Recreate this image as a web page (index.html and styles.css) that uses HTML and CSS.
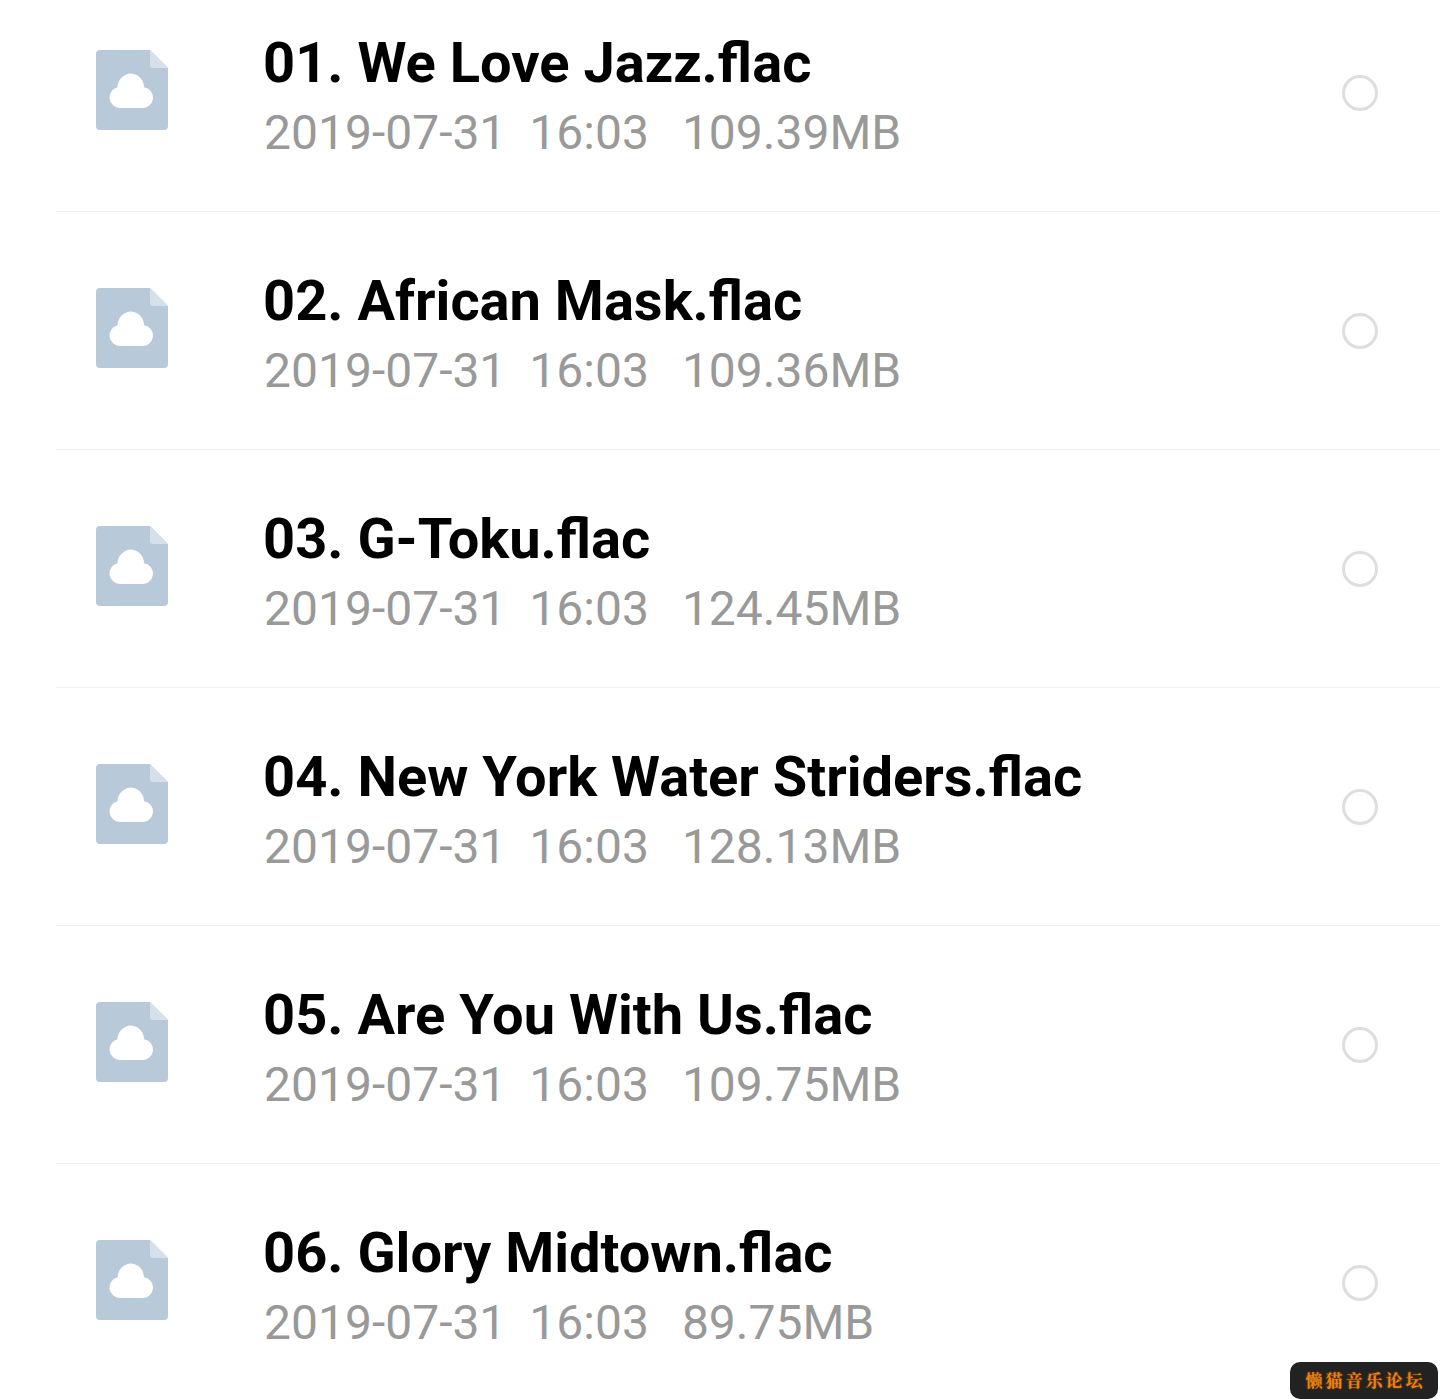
FILE: index.html
```html
<!DOCTYPE html>
<html>
<head>
    <meta charset="UTF-8">
    <title>Files</title>
    <link rel="stylesheet" href="styles.css">
</head>
<body>
<svg class="hidden" width="0" height="0">
    <symbol id="file_icon" viewBox="0 0 72 80">
        <path fill="#b8cad9" d="M4 0H54L72 18V76a4 4 0 0 1-4 4H4a4 4 0 0 1-4-4V4a4 4 0 0 1 4-4z"/>
        <path fill="#d5e0ea" d="M54 0L72 18H57a3 3 0 0 1-3-3z"/>
        <path fill="#fff" d="M24 58a10.500 10.500 0 0 1-2.500-20.700A14 14 0 0 1 35 23.500a14 14 0 0 1 13 13.700A10.500 10.500 0 0 1 45 58z"/>
    </symbol>
</svg>
<ul class="file_list">
    <li class="file_row">
        <svg class="file_icon"><use href="#file_icon"/></svg>
        <div class="file_info">
            <div class="file_name">01. We Love Jazz.flac</div>
            <div class="file_meta"><span>2019-07-31</span><span>16:03</span><span>109.39MB</span></div>
        </div>
        <span class="radio"></span>
    </li>
    <li class="file_row">
        <svg class="file_icon"><use href="#file_icon"/></svg>
        <div class="file_info">
            <div class="file_name">02. African Mask.flac</div>
            <div class="file_meta"><span>2019-07-31</span><span>16:03</span><span>109.36MB</span></div>
        </div>
        <span class="radio"></span>
    </li>
    <li class="file_row">
        <svg class="file_icon"><use href="#file_icon"/></svg>
        <div class="file_info">
            <div class="file_name">03. G-Toku.flac</div>
            <div class="file_meta"><span>2019-07-31</span><span>16:03</span><span>124.45MB</span></div>
        </div>
        <span class="radio"></span>
    </li>
    <li class="file_row">
        <svg class="file_icon"><use href="#file_icon"/></svg>
        <div class="file_info">
            <div class="file_name">04. New York Water Striders.flac</div>
            <div class="file_meta"><span>2019-07-31</span><span>16:03</span><span>128.13MB</span></div>
        </div>
        <span class="radio"></span>
    </li>
    <li class="file_row">
        <svg class="file_icon"><use href="#file_icon"/></svg>
        <div class="file_info">
            <div class="file_name">05. Are You With Us.flac</div>
            <div class="file_meta"><span>2019-07-31</span><span>16:03</span><span>109.75MB</span></div>
        </div>
        <span class="radio"></span>
    </li>
    <li class="file_row">
        <svg class="file_icon"><use href="#file_icon"/></svg>
        <div class="file_info">
            <div class="file_name">06. Glory Midtown.flac</div>
            <div class="file_meta"><span>2019-07-31</span><span>16:03</span><span>89.75MB</span></div>
        </div>
        <span class="radio"></span>
    </li>
</ul>
<div class="watermark">懒猫音乐论坛</div>
</body>
</html>
```

FILE: styles.css
```css
html, body {
    margin: 0;
    padding: 0;
}
html {
    height: 100%;
}
body {
    position: relative;
    height: 1400px;
    overflow: hidden;
    background: #fff;
    font-family: Roboto, 'Noto Sans CJK SC', sans-serif;
}
.hidden {
    position: absolute;
}
.file_list {
    list-style: none;
    margin: -26px 0 0 56px;
    padding: 0;
}
.file_row {
    display: flex;
    align-items: center;
    box-sizing: border-box;
    height: 238px;
    padding: 0 62px 0 40px;
    border-bottom: 1px solid #f0f0f0;
}
.file_icon {
    flex: none;
    width: 72px;
    height: 80px;
    margin-bottom: 6px;
}
.file_info {
    flex: 1;
    margin-left: 96px;
    padding-top: 10px;
}
.file_name {
    margin-left: -1px;
    font-size: 56px;
    font-weight: 700;
    line-height: 64px;
    color: #000;
}
.file_meta {
    display: flex;
    margin-top: 6px;
    font-size: 48px;
    line-height: 64px;
    color: #999;
}
.file_meta span + span {
    margin-left: 23px;
}
.file_meta span:last-child {
    margin-left: 33px;
}
.radio {
    flex: none;
    box-sizing: border-box;
    width: 36px;
    height: 36px;
    border: 3px solid #dedede;
    border-radius: 50%;
}
.watermark {
    position: absolute;
    right: 2px;
    bottom: 1px;
    box-sizing: border-box;
    width: 148px;
    height: 37px;
    padding-left: 3px;
    border-radius: 10px;
    background: #222;
    color: #f08010;
    font-family: 'Noto Serif CJK SC', 'Noto Sans CJK SC', sans-serif;
    font-size: 17px;
    font-weight: 700;
    line-height: 35px;
    letter-spacing: 3px;
    text-align: center;
    text-shadow: 0 0 2px #a85a08;
}
```
